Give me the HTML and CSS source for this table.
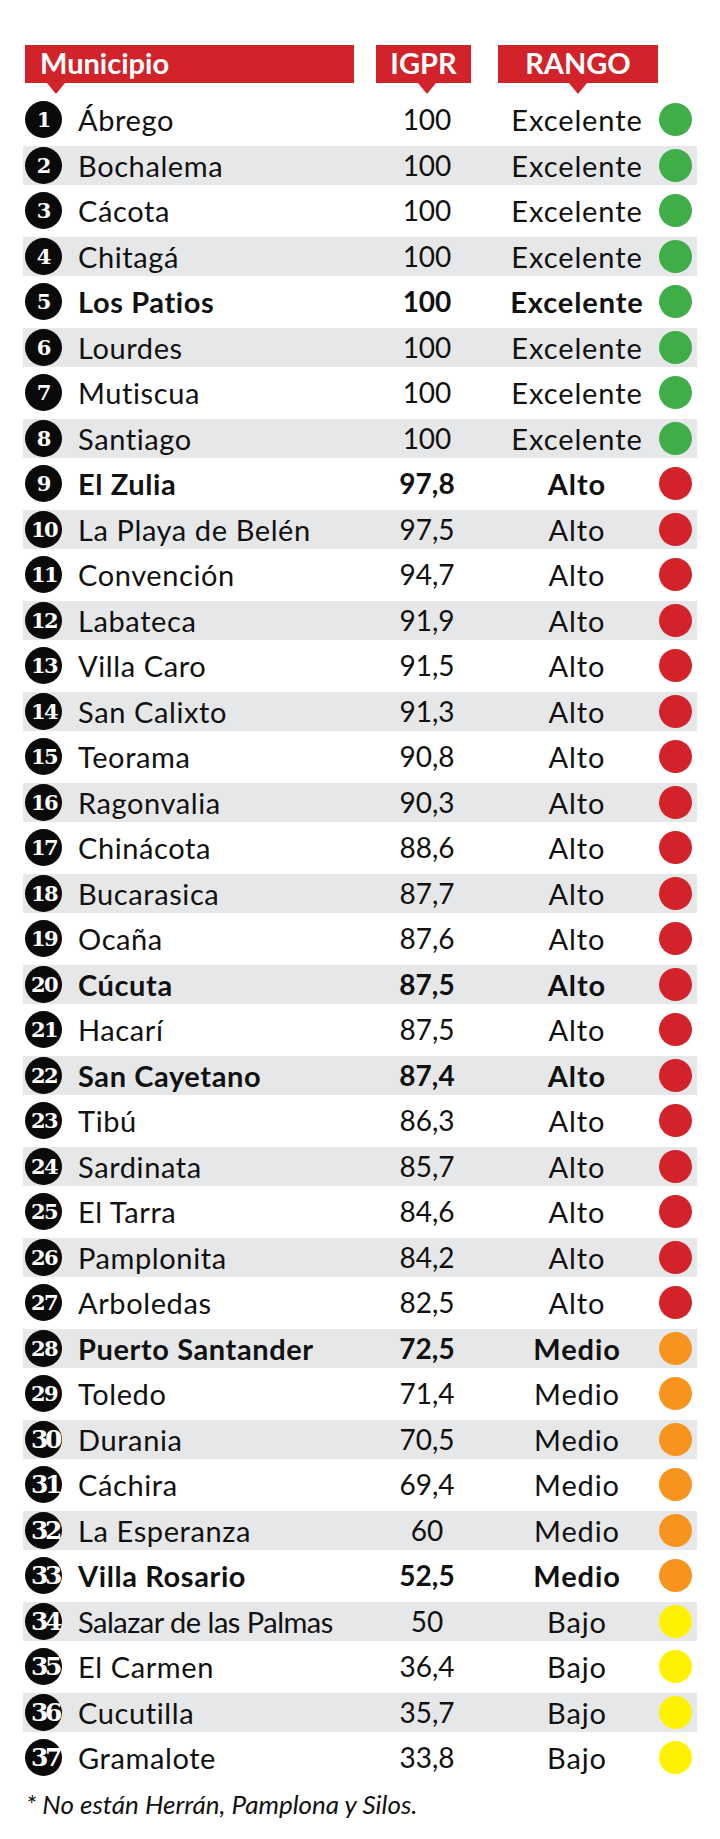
FILE: index.html
```html
<!DOCTYPE html>
<html lang="es">
<head>
<meta charset="utf-8">
<link rel="stylesheet" href="styles.css">
</head>
<body>
<div class="page">
  <div class="head">
    <div class="tag tag-mun">Municipio</div>
    <div class="tag tag-igpr">IGPR</div>
    <div class="tag tag-rango">RANGO</div>
  </div>
  <div class="rows">
    <div class="row"><span class="num">1</span><span class="name">Ábrego</span><span class="val">100</span><span class="rng">Excelente</span><span class="dot green"></span></div>
    <div class="row alt"><span class="num">2</span><span class="name">Bochalema</span><span class="val">100</span><span class="rng">Excelente</span><span class="dot green"></span></div>
    <div class="row"><span class="num">3</span><span class="name">Cácota</span><span class="val">100</span><span class="rng">Excelente</span><span class="dot green"></span></div>
    <div class="row alt"><span class="num">4</span><span class="name">Chitagá</span><span class="val">100</span><span class="rng">Excelente</span><span class="dot green"></span></div>
    <div class="row bold"><span class="num">5</span><span class="name">Los Patios</span><span class="val">100</span><span class="rng">Excelente</span><span class="dot green"></span></div>
    <div class="row alt"><span class="num">6</span><span class="name">Lourdes</span><span class="val">100</span><span class="rng">Excelente</span><span class="dot green"></span></div>
    <div class="row"><span class="num">7</span><span class="name">Mutiscua</span><span class="val">100</span><span class="rng">Excelente</span><span class="dot green"></span></div>
    <div class="row alt"><span class="num">8</span><span class="name">Santiago</span><span class="val">100</span><span class="rng">Excelente</span><span class="dot green"></span></div>
    <div class="row bold"><span class="num">9</span><span class="name">El Zulia</span><span class="val">97,8</span><span class="rng">Alto</span><span class="dot red"></span></div>
    <div class="row alt"><span class="num two">10</span><span class="name">La Playa de Belén</span><span class="val">97,5</span><span class="rng">Alto</span><span class="dot red"></span></div>
    <div class="row"><span class="num two">11</span><span class="name">Convención</span><span class="val">94,7</span><span class="rng">Alto</span><span class="dot red"></span></div>
    <div class="row alt"><span class="num two">12</span><span class="name">Labateca</span><span class="val">91,9</span><span class="rng">Alto</span><span class="dot red"></span></div>
    <div class="row"><span class="num two">13</span><span class="name">Villa Caro</span><span class="val">91,5</span><span class="rng">Alto</span><span class="dot red"></span></div>
    <div class="row alt"><span class="num two">14</span><span class="name">San Calixto</span><span class="val">91,3</span><span class="rng">Alto</span><span class="dot red"></span></div>
    <div class="row"><span class="num two">15</span><span class="name">Teorama</span><span class="val">90,8</span><span class="rng">Alto</span><span class="dot red"></span></div>
    <div class="row alt"><span class="num two">16</span><span class="name">Ragonvalia</span><span class="val">90,3</span><span class="rng">Alto</span><span class="dot red"></span></div>
    <div class="row"><span class="num two">17</span><span class="name">Chinácota</span><span class="val">88,6</span><span class="rng">Alto</span><span class="dot red"></span></div>
    <div class="row alt"><span class="num two">18</span><span class="name">Bucarasica</span><span class="val">87,7</span><span class="rng">Alto</span><span class="dot red"></span></div>
    <div class="row"><span class="num two">19</span><span class="name">Ocaña</span><span class="val">87,6</span><span class="rng">Alto</span><span class="dot red"></span></div>
    <div class="row alt bold"><span class="num two">20</span><span class="name">Cúcuta</span><span class="val">87,5</span><span class="rng">Alto</span><span class="dot red"></span></div>
    <div class="row"><span class="num two">21</span><span class="name">Hacarí</span><span class="val">87,5</span><span class="rng">Alto</span><span class="dot red"></span></div>
    <div class="row alt bold"><span class="num two">22</span><span class="name">San Cayetano</span><span class="val">87,4</span><span class="rng">Alto</span><span class="dot red"></span></div>
    <div class="row"><span class="num two">23</span><span class="name">Tibú</span><span class="val">86,3</span><span class="rng">Alto</span><span class="dot red"></span></div>
    <div class="row alt"><span class="num two">24</span><span class="name">Sardinata</span><span class="val">85,7</span><span class="rng">Alto</span><span class="dot red"></span></div>
    <div class="row"><span class="num two">25</span><span class="name">El Tarra</span><span class="val">84,6</span><span class="rng">Alto</span><span class="dot red"></span></div>
    <div class="row alt"><span class="num two">26</span><span class="name">Pamplonita</span><span class="val">84,2</span><span class="rng">Alto</span><span class="dot red"></span></div>
    <div class="row"><span class="num two">27</span><span class="name">Arboledas</span><span class="val">82,5</span><span class="rng">Alto</span><span class="dot red"></span></div>
    <div class="row alt bold"><span class="num two">28</span><span class="name">Puerto Santander</span><span class="val">72,5</span><span class="rng">Medio</span><span class="dot orange"></span></div>
    <div class="row"><span class="num two">29</span><span class="name">Toledo</span><span class="val">71,4</span><span class="rng">Medio</span><span class="dot orange"></span></div>
    <div class="row alt"><span class="num big">30</span><span class="name">Durania</span><span class="val">70,5</span><span class="rng">Medio</span><span class="dot orange"></span></div>
    <div class="row"><span class="num big">31</span><span class="name">Cáchira</span><span class="val">69,4</span><span class="rng">Medio</span><span class="dot orange"></span></div>
    <div class="row alt"><span class="num big">32</span><span class="name">La Esperanza</span><span class="val">60</span><span class="rng">Medio</span><span class="dot orange"></span></div>
    <div class="row bold"><span class="num big">33</span><span class="name">Villa Rosario</span><span class="val">52,5</span><span class="rng">Medio</span><span class="dot orange"></span></div>
    <div class="row alt"><span class="num big">34</span><span class="name tight">Salazar de las Palmas</span><span class="val">50</span><span class="rng">Bajo</span><span class="dot yellow"></span></div>
    <div class="row"><span class="num big">35</span><span class="name">El Carmen</span><span class="val">36,4</span><span class="rng">Bajo</span><span class="dot yellow"></span></div>
    <div class="row alt"><span class="num big">36</span><span class="name">Cucutilla</span><span class="val">35,7</span><span class="rng">Bajo</span><span class="dot yellow"></span></div>
    <div class="row"><span class="num big">37</span><span class="name">Gramalote</span><span class="val">33,8</span><span class="rng">Bajo</span><span class="dot yellow"></span></div>
  </div>
  <p class="note">* No están Herrán, Pamplona y Silos.</p>
</div>
</body>
</html>
```

FILE: styles.css
```css
html, body {
  margin: 0;
  padding: 0;
  background: #ffffff;
}

.page {
  width: 720px;
  padding-top: 45px;
  font-family: Lato, "Noto Sans", sans-serif;
  color: #111111;
}

.head {
  display: flex;
  height: 38px;
  padding-left: 25px;
  margin-bottom: 17px;
}

.tag {
  position: relative;
  height: 38px;
  background: #d2232a;
  color: #ffffff;
  font-weight: 700;
  font-size: 29px;
  line-height: 36px;
  box-sizing: border-box;
}

.tag::after {
  content: "";
  position: absolute;
  top: 38px;
  border-left: 9px solid transparent;
  border-right: 9px solid transparent;
  border-top: 11px solid #d2232a;
  margin-left: -9px;
}

.tag-mun {
  width: 329px;
  padding-left: 15px;
}
.tag-mun::after { left: 31px; }

.tag-igpr {
  width: 95px;
  margin-left: 22px;
  text-align: center;
}
.tag-igpr::after { left: 51px; }

.tag-rango {
  width: 160px;
  margin-left: 27px;
  text-align: center;
}
.tag-rango::after { left: 80px; }

.rows {
  display: flex;
  flex-direction: column;
  gap: 6.5px;
  margin-left: 23px;
  width: 674px;
}

.row {
  display: grid;
  grid-template-columns: 37px 313px 104px 180px 33px;
  align-items: center;
  height: 39px;
  padding: 0 5px 0 2px;
  font-size: 28px;
  line-height: 39px;
}

.row.alt {
  background: #e6e7e8;
}

.row.bold .name,
.row.bold .val,
.row.bold .rng {
  font-weight: 700;
}

.num {
  width: 37px;
  height: 37px;
  border-radius: 50%;
  background: #0a0a0a;
  color: #ffffff;
  font-family: "DejaVu Serif", "Liberation Serif", serif;
  font-weight: 700;
  font-size: 21px;
  line-height: 37px;
  text-align: center;
  letter-spacing: -1px;
  white-space: nowrap;
}

.num.two {
  font-size: 21px;
  letter-spacing: -1.5px;
  text-indent: 1px;
}

.num.big {
  font-size: 25px;
  letter-spacing: -3.5px;
  text-indent: 3px;
}

.name {
  padding-left: 16px;
  font-size: 29px;
  letter-spacing: 0.6px;
  white-space: nowrap;
}

.name.tight {
  letter-spacing: -0.5px;
}

.val {
  text-align: center;
}

.rng {
  padding-left: 16px;
  font-size: 29px;
  letter-spacing: 0.9px;
  text-align: center;
}

.dot {
  width: 33px;
  height: 33px;
  border-radius: 50%;
}

.green { background: #3fae49; }
.red { background: #d3222a; }
.orange { background: #f7941d; }
.yellow { background: #fff200; }

.note {
  margin: 12px 0 0 26px;
  font-style: italic;
  font-size: 26px;
  line-height: 30px;
}
```
